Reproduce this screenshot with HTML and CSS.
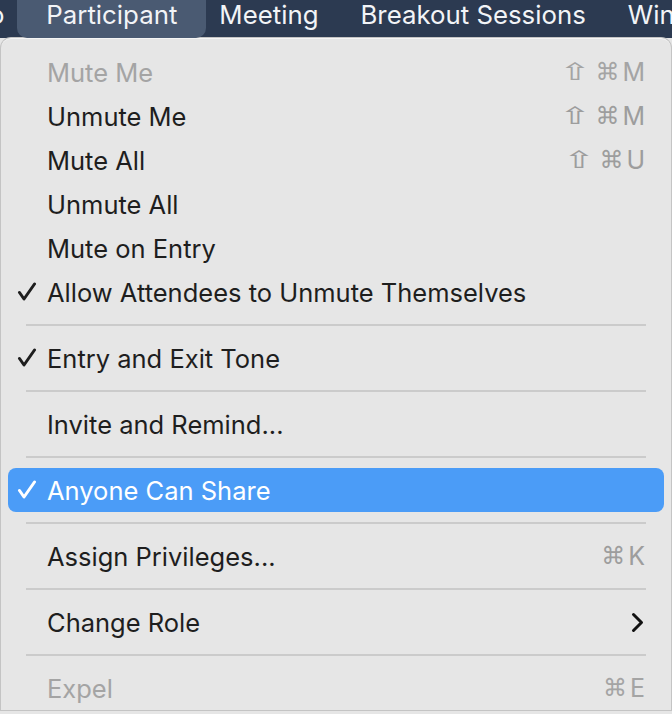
FILE: index.html
```html
<!DOCTYPE html>
<html>
<head>
<meta charset="utf-8">
<link rel="stylesheet" href="styles.css">
</head>
<body>
<div class="menubar">
  <span class="mb-item mb-first">Video</span>
  <span class="mb-item mb-active">Participant</span>
  <span class="mb-item">Meeting</span>
  <span class="mb-item">Breakout Sessions</span>
  <span class="mb-item">Window</span>
</div>
<div class="menu">
  <div class="row disabled"><span class="check"></span><span class="label">Mute Me</span><span class="key"><span class="mod shift">⇧</span><span class="mod">⌘</span>M</span></div>
  <div class="row"><span class="check"></span><span class="label">Unmute Me</span><span class="key"><span class="mod shift">⇧</span><span class="mod">⌘</span>M</span></div>
  <div class="row"><span class="check"></span><span class="label">Mute All</span><span class="key"><span class="mod shift">⇧</span><span class="mod">⌘</span>U</span></div>
  <div class="row"><span class="check"></span><span class="label">Unmute All</span></div>
  <div class="row"><span class="check"></span><span class="label">Mute on Entry</span></div>
  <div class="row"><span class="check"><svg width="20" height="20" viewBox="0 0 20 20"><path d="M2.5 10.5 L7 17 L17.5 2" fill="none" stroke="currentColor" stroke-width="3" stroke-linecap="round" stroke-linejoin="round"/></svg></span><span class="label">Allow Attendees to Unmute Themselves</span></div>
  <div class="sep"></div>
  <div class="row"><span class="check"><svg width="20" height="20" viewBox="0 0 20 20"><path d="M2.5 10.5 L7 17 L17.5 2" fill="none" stroke="currentColor" stroke-width="3" stroke-linecap="round" stroke-linejoin="round"/></svg></span><span class="label">Entry and Exit Tone</span></div>
  <div class="sep"></div>
  <div class="row"><span class="check"></span><span class="label">Invite and Remind...</span></div>
  <div class="sep"></div>
  <div class="row selected"><span class="check"><svg width="20" height="20" viewBox="0 0 20 20"><path d="M2.5 10.5 L7 17 L17.5 2" fill="none" stroke="currentColor" stroke-width="3" stroke-linecap="round" stroke-linejoin="round"/></svg></span><span class="label">Anyone Can Share</span></div>
  <div class="sep"></div>
  <div class="row"><span class="check"></span><span class="label">Assign Privileges...</span><span class="key"><span class="mod">⌘</span>K</span></div>
  <div class="sep"></div>
  <div class="row"><span class="check"></span><span class="label">Change Role</span>
    <svg class="chev" width="13" height="21" viewBox="0 0 13 21"><path d="M2.5 2.5 L10.5 10.5 L2.5 18.5" fill="none" stroke="#111111" stroke-width="3" stroke-linecap="round" stroke-linejoin="round"/></svg>
  </div>
  <div class="sep"></div>
  <div class="row disabled"><span class="check"></span><span class="label">Expel</span><span class="key"><span class="mod">⌘</span>E</span></div>
</div>
</body>
</html>
```
FILE: styles.css
```css
* { box-sizing: border-box; }
html, body { margin: 0; padding: 0; }
body {
  width: 672px;
  height: 714px;
  overflow: hidden;
  background: #e6e6e6;
  font-family: Inter, "Noto Sans", sans-serif;
}
.menubar {
  height: 38px;
  background: #2c3a51;
  display: flex;
  align-items: stretch;
  overflow: hidden;
  white-space: nowrap;
}
.mb-item {
  color: #f2f4f7;
  font-size: 25.8px;
  line-height: 30px;
  padding: 0 21px 9px;
  display: flex;
  align-items: center;
}
.mb-first { margin-left: -87px; }
.mb-active {
  background: #4a5a72;
  border-radius: 0 0 10px 10px;
  padding: 0 29px 9px;
  margin: 0 -8px;
}
.menu {
  margin: 0 1px;
  background: #e6e6e6;
  border-top: 1px solid #f5f5f5;
  border-radius: 10px 10px 0 0;
  padding-top: 11px;
  display: flex;
  flex-direction: column;
  box-shadow: 0 0 0 1px #c4c4c4;
}
.row {
  height: 44px;
  margin: 0 7px;
  padding: 0 19px 0 9px;
  display: flex;
  align-items: center;
  font-size: 25.5px;
  color: #1e1e1e;
  border-radius: 8px;
}
.check {
  width: 30px;
  height: 20px;
  display: flex;
  align-items: center;
}
.check svg { display: block; }
.label { flex: 1; }
.key {
  color: #9d9d9d;
  font-size: 25px;
  display: flex;
  align-items: center;
}
.mod {
  font-family: "DejaVu Sans", sans-serif;
  font-size: 24px;
  line-height: 30px;
  margin-right: 3px;
}
.shift {
  display: inline-block;
  font-size: 27px;
  transform: scale(1.45, 0.88);
  margin: 0 9px 0 2px;
}
.disabled .label, .disabled .key { color: #a4a4a4; }
.selected {
  background: #4b9cf7;
  color: #ffffff;
}
.sep {
  height: 2px;
  margin: 10px 25px;
  background: #cbcbcb;
}
.chev { display: block; margin-right: 1px; }
```
